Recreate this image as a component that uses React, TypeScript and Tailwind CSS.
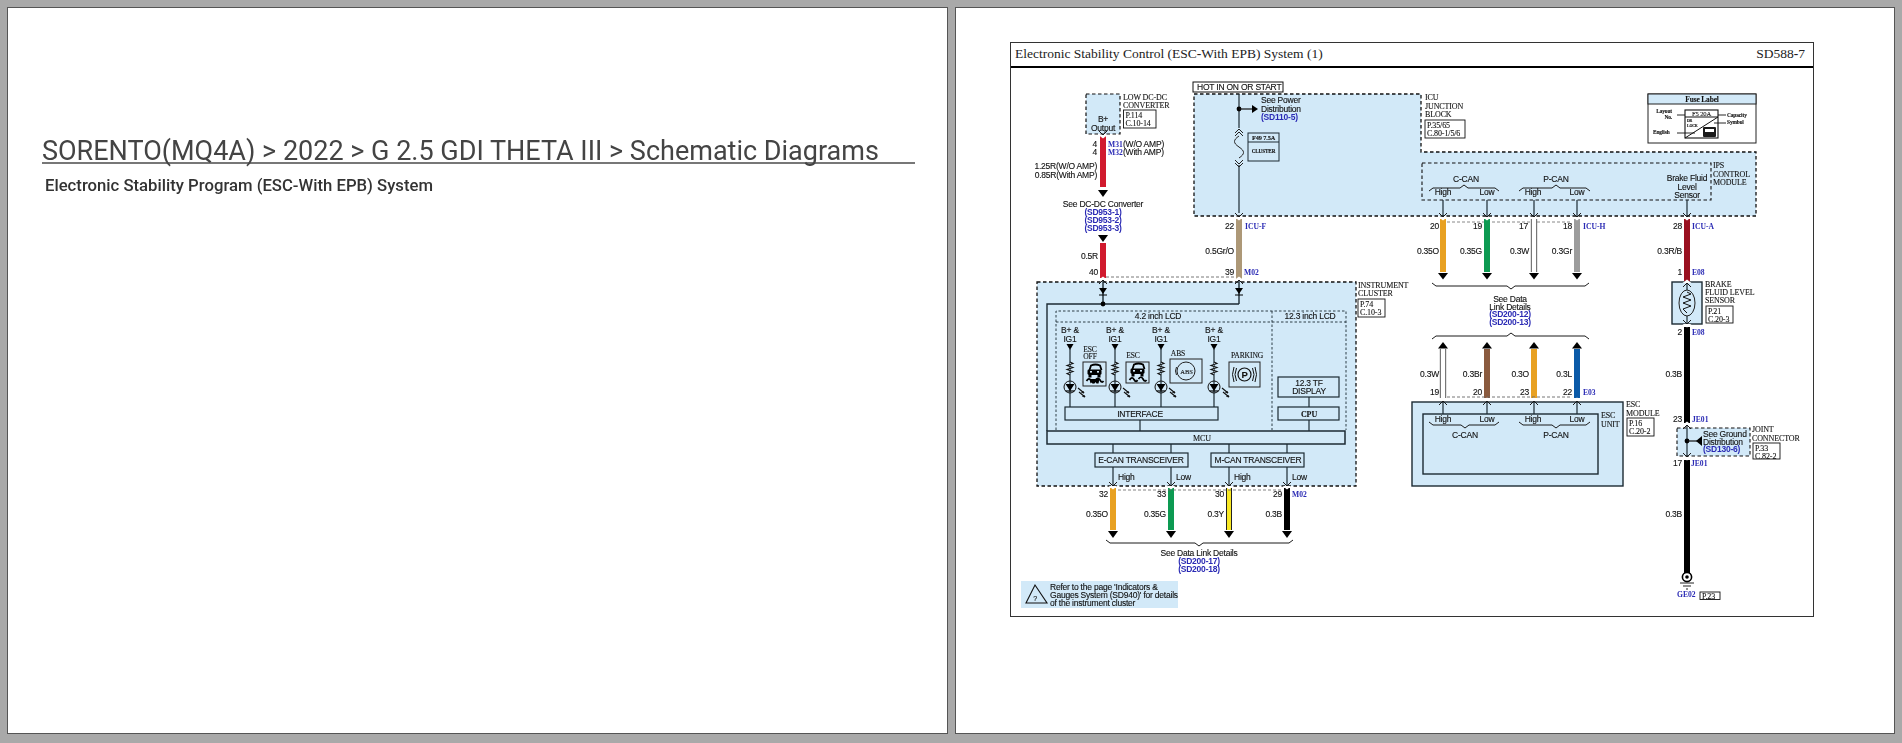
const INK = "#1c2a33";
const SKY = "#d2e9f8";
const BLUE = "#2a2ab4";

type TextProps = {
  x: number;
  y: number;
  children: React.ReactNode;
  size?: number;
  anchor?: "start" | "middle" | "end";
  bold?: boolean;
};

// sans label, most of the diagram uses this
function L({ x, y, children, size = 8.5, anchor = "start", bold }: TextProps) {
  return (
    <text x={x} y={y} fontSize={size} textAnchor={anchor} fontWeight={bold ? 700 : 400} fill="#111" stroke="#111" strokeWidth={0.12} className="font-['Liberation_Sans',sans-serif] tracking-[-0.22px]">
      {children}
    </text>
  );
}

// serif label for component names and page refs
function S({ x, y, children, size = 8, anchor = "start", bold }: TextProps) {
  return (
    <text x={x} y={y} fontSize={size} textAnchor={anchor} fontWeight={bold ? 700 : 400} fill="#111" stroke="#111" strokeWidth={0.1} className="font-['Liberation_Serif',serif] tracking-[-0.12px]">
      {children}
    </text>
  );
}

// blue sheet reference
function Ref({ x, y, children, anchor = "middle" }: TextProps) {
  return (
    <text x={x} y={y} fontSize={8.5} textAnchor={anchor} fontWeight={700} fill={BLUE} className="font-['Liberation_Sans',sans-serif] tracking-[-0.22px]">
      {children}
    </text>
  );
}

// blue connector name
function Con({ x, y, children }: TextProps) {
  return (
    <text x={x} y={y} fontSize={7.6} fontWeight={700} fill={BLUE} className="font-['Liberation_Serif',serif]">
      {children}
    </text>
  );
}

function Wire({ x, y1, y2, color, hollow }: { x: number; y1: number; y2: number; color: string; hollow?: boolean }) {
  if (hollow) {
    return (
      <g>
        <rect x={x - 3} y={y1} width={6} height={y2 - y1} fill="#fff" />
        <line x1={x - 2.6} y1={y1} x2={x - 2.6} y2={y2} stroke="#777" strokeWidth={1.2} />
        <line x1={x + 2.6} y1={y1} x2={x + 2.6} y2={y2} stroke="#777" strokeWidth={1.2} />
      </g>
    );
  }
  return <rect x={x - 3} y={y1} width={6} height={y2 - y1} fill={color} />;
}

function Pin({ x, y, up }: { x: number; y: number; up?: boolean }) {
  const s = up ? -1 : 1;
  return (
    <g>
      <polygon points={`${x - 4.5},${y} ${x + 4.5},${y} ${x},${y + 3.5 * s}`} fill="#fff" />
      <polyline points={`${x - 4},${y - 4 * s} ${x},${y} ${x + 4},${y - 4 * s}`} fill="none" stroke="#1a1a1a" strokeWidth={1} />
    </g>
  );
}

function Tri({ x, y, up, w = 5, h = 7 }: { x: number; y: number; up?: boolean; w?: number; h?: number }) {
  return <polygon points={up ? `${x - w},${y + h} ${x + w},${y + h} ${x},${y}` : `${x - w},${y} ${x + w},${y} ${x},${y + h}`} fill="#000" />;
}

function V({ x, y1, y2, w = 1.2 }: { x: number; y1: number; y2: number; w?: number }) {
  return <line x1={x} y1={y1} x2={x} y2={y2} stroke={INK} strokeWidth={w} />;
}

function Brace({ x1, x2, c, y, up }: { x1: number; x2: number; c: number; y: number; up?: boolean }) {
  const s = up ? -1 : 1;
  return (
    <polyline
      points={`${x1},${y - 3 * s} ${x1 + 4},${y} ${c - 4},${y} ${c},${y + 3 * s} ${c + 4},${y} ${x2 - 4},${y} ${x2},${y - 3 * s}`}
      fill="none"
      stroke="#1a1a1a"
      strokeWidth={1}
    />
  );
}

function RefBox({ x, y, w, h, a, b }: { x: number; y: number; w: number; h: number; a: string; b: string }) {
  return (
    <g>
      <rect x={x} y={y} width={w} height={h} fill="#fff" stroke="#111" strokeWidth={0.9} />
      <S x={x + 2} y={y + 8}>{a}</S>
      <S x={x + 2} y={y + 15.5}>{b}</S>
    </g>
  );
}

function Box({ x, y, w, h, sw = 1.2 }: { x: number; y: number; w: number; h: number; sw?: number }) {
  return <rect x={x} y={y} width={w} height={h} fill={SKY} stroke={INK} strokeWidth={sw} />;
}

function Zig({ x, y }: { x: number; y: number }) {
  return (
    <polyline
      points={`${x},${y} ${x + 3},${y + 1.5} ${x - 3},${y + 3.5} ${x + 3},${y + 5.5} ${x - 3},${y + 7.5} ${x + 3},${y + 9.5} ${x - 3},${y + 11.5} ${x},${y + 13}`}
      fill={SKY}
      stroke="#111"
      strokeWidth={1.1}
    />
  );
}

function Lamp({ x }: { x: number }) {
  return (
    <g>
      <L x={x} y={333} anchor="middle">B+ &amp;</L>
      <L x={x} y={342} anchor="middle">IG1</L>
      <Tri x={x} y={344} w={3.5} h={6} />
      <V x={x} y1={349} y2={407} />
      <Zig x={x} y={362} />
      <circle cx={x} cy={387} r={6} fill={SKY} stroke="#111" strokeWidth={1} />
      <V x={x} y1={381} y2={393} />
      <polygon points={`${x - 4.5},${384} ${x + 4.5},${384} ${x},${391}`} fill="#000" />
      <line x1={x - 4.5} y1={391} x2={x + 4.5} y2={391} stroke="#000" strokeWidth={1.2} />
      <path d={`M${x + 8} ${388}l6 5m-5 -1l6 5`} stroke="#111" strokeWidth={1.1} fill="none" />
      <path d={`M${x + 14} ${393}l-2.5 -.5l1.5 -1.5zM${x + 15} ${397}l-2.5 -.5l1.5 -1.5z`} fill="#111" stroke="#111" strokeWidth={0.6} />
    </g>
  );
}

// skid car telltale used for ESC and ESC OFF
function SkidCar({ x, y, off }: { x: number; y: number; off?: boolean }) {
  return (
    <g>
      <path d={`M${x - 5} ${y - 2}l1.5 -4.5q4.5 -2 9 0l1.5 4.5`} fill="none" stroke="#000" strokeWidth={1.8} />
      <rect x={x - 7} y={y - 2.5} width={14} height={5.5} rx={1.4} fill="#000" />
      <rect x={x - 4.5} y={y - 1} width={2} height={1.6} fill={SKY} />
      <rect x={x + 2.5} y={y - 1} width={2} height={1.6} fill={SKY} />
      <rect x={x - 6} y={y + 3} width={3} height={2.5} fill="#000" />
      <rect x={x + 3} y={y + 3} width={3} height={2.5} fill="#000" />
      <path d={`M${x - 8} ${y + 9}q2.5 -4 4.5 -.5t3.5 .5M${x + 1} ${y + 8}q2.5 -3.5 4.5 0t3.5 1`} fill="none" stroke="#000" strokeWidth={1.7} />
      {off && <path d={`M${x - 5} ${y + 7}h10l-1 4.5h-2l-1 -1.5l-1 1.5h-2l-1 -1.5l-1 1.5z`} fill="#000" />}
    </g>
  );
}

function Diagram() {
  return (
    <svg viewBox="1011 68 802 548" className="block h-[548px] w-[802px] blur-[0.35px]">
      {/* B+ output */}
      <rect x={1086} y={94} width={34} height={40} fill={SKY} stroke="#111" strokeWidth={1.2} strokeDasharray="3.5 2.5" />
      <L x={1103} y={122} anchor="middle">B+</L>
      <L x={1103} y={131} anchor="middle">Output</L>
      <S x={1123} y={100}>LOW DC-DC</S>
      <S x={1123} y={108}>CONVERTER</S>
      <RefBox x={1123.5} y={110} w={32.5} h={18} a="P.114" b="C.10-14" />
      <Wire x={1103} y1={136} y2={187} color="#d11a2e" />
      <Pin x={1103} y={135} />
      <L x={1097} y={147} anchor="end">4</L>
      <L x={1097} y={155} anchor="end">4</L>
      <Con x={1108} y={147}>M31</Con>
      <L x={1123} y={147}>(W/O AMP)</L>
      <Con x={1108} y={155}>M32</Con>
      <L x={1123} y={155}>(With AMP)</L>
      <L x={1097} y={169} anchor="end">1.25R(W/O AMP)</L>
      <L x={1097} y={178} anchor="end">0.85R(With AMP)</L>
      <Tri x={1103} y={190} />
      <L x={1103} y={207} anchor="middle">See DC-DC Converter</L>
      <Ref x={1103} y={215}>(SD953-1)</Ref>
      <Ref x={1103} y={223}>(SD953-2)</Ref>
      <Ref x={1103} y={231}>(SD953-3)</Ref>
      <Tri x={1103} y={235} />
      <Wire x={1103} y1={243} y2={278} color="#d11a2e" />
      <L x={1098} y={259} anchor="end">0.5R</L>
      <L x={1098} y={275} anchor="end">40</L>

      {/* ICU junction block */}
      <polygon points="1194,94 1421,94 1421,152 1756,152 1756,216 1194,216" fill={SKY} stroke="#111" strokeWidth={1.3} strokeDasharray="3.5 2.5" />
      <rect x={1193} y={82} width={90} height={10} fill="#fff" stroke="#111" strokeWidth={1} />
      <L x={1197} y={90.3} size={8.5}>HOT IN ON OR START</L>
      <V x={1239} y1={94} y2={213} />
      <circle cx={1239} cy={109} r={2.4} fill="#000" />
      <line x1={1239} y1={109} x2={1254} y2={109} stroke="#111" strokeWidth={1.2} />
      <polygon points="1252,105 1258,109 1252,113" fill="#000" />
      <L x={1261} y={103}>See Power</L>
      <L x={1261} y={112}>Distribution</L>
      <Ref x={1261} y={120} anchor="start">(SD110-5)</Ref>
      <rect x={1236} y={128} width={6} height={37} fill={SKY} />
      <path d="M1235 133l4-4l4 4M1235 136l4-4l4 4M1235 160l4 4l4-4M1235 163l4 4l4-4" fill="none" stroke="#222" strokeWidth={1} />
      <path d="M1239 136c-6 4-6 7 0 11c6 4 6 7 0 11" fill="none" stroke="#222" strokeWidth={1} />
      <rect x={1248} y={133} width={31} height={28} fill={SKY} stroke={INK} strokeWidth={1} />
      <line x1={1248} y1={142} x2={1279} y2={142} stroke={INK} strokeWidth={1} />
      <S x={1263.5} y={140} size={6.3} anchor="middle" bold>F49 7.5A</S>
      <S x={1263.5} y={153} size={5.2} anchor="middle" bold>CLUSTER</S>
      <Wire x={1239} y1={219} y2={279} color="#ad9877" />
      <Pin x={1239} y={217} />
      <L x={1234} y={229} anchor="end">22</L>
      <Con x={1245} y={229}>ICU-F</Con>
      <L x={1234} y={254} anchor="end">0.5Gr/O</L>
      <L x={1234} y={275} anchor="end">39</L>
      <Con x={1244} y={275}>M02</Con>
      <S x={1425} y={100}>ICU</S>
      <S x={1425} y={108.5}>JUNCTION</S>
      <S x={1425} y={117}>BLOCK</S>
      <RefBox x={1425} y={120} w={40} h={18} a="P.35/65" b="C.80-1/5/6" />

      {/* fuse legend */}
      <rect x={1648} y={94} width={108} height={49} fill="#fff" stroke="#222" strokeWidth={1} />
      <rect x={1648} y={94} width={108} height={10} fill={SKY} stroke="#222" strokeWidth={1} />
      <S x={1702} y={102} size={7.4} anchor="middle" bold>Fuse Label</S>
      <rect x={1685} y={110} width={33} height={28} fill="#fff" stroke="#111" strokeWidth={1.1} />
      <line x1={1685} y1={117} x2={1718} y2={117} stroke="#111" strokeWidth={1} />
      <line x1={1685} y1={138} x2={1718} y2={117} stroke="#111" strokeWidth={1} />
      <S x={1701.5} y={116} size={6.6} anchor="middle">F5 20A</S>
      <S x={1687} y={122} size={3.8} bold>DR</S>
      <S x={1687} y={127} size={3.8} bold>LOCK</S>
      <rect x={1703} y={127} width={13} height={10} rx={1} fill="#1a1a1a" />
      <rect x={1705} y={129} width={9} height={3} fill="#fff" />
      <S x={1672} y={113} size={5.4} anchor="end" bold>Layout</S>
      <S x={1672} y={119} size={5.4} anchor="end" bold>No.</S>
      <S x={1653} y={134} size={5.4} bold>English</S>
      <S x={1727} y={116.5} size={5.4} bold>Capacity</S>
      <S x={1727} y={124} size={5.4} bold>Symbol</S>
      <path d="M1677 115h8M1718 115h8M1714 123h12M1677 133h18" stroke="#111" strokeWidth={0.9} fill="none" />

      {/* IPS control module */}
      <rect x={1422} y={163} width={289} height={37} fill={SKY} stroke="#111" strokeWidth={1.1} strokeDasharray="3.5 2.5" />
      <S x={1713} y={168}>IPS</S>
      <S x={1713} y={176.5}>CONTROL</S>
      <S x={1713} y={185}>MODULE</S>
      <L x={1466} y={182} anchor="middle">C-CAN</L>
      <L x={1556} y={182} anchor="middle">P-CAN</L>
      <Brace x1={1429} x2={1499} c={1464} y={188} up />
      <Brace x1={1519} x2={1590} c={1556} y={188} up />
      <L x={1443} y={195} anchor="middle">High</L>
      <L x={1487} y={195} anchor="middle">Low</L>
      <L x={1533} y={195} anchor="middle">High</L>
      <L x={1577} y={195} anchor="middle">Low</L>
      <L x={1687} y={181} anchor="middle">Brake Fluid</L>
      <L x={1687} y={190} anchor="middle">Level</L>
      <L x={1687} y={198} anchor="middle">Sensor</L>

      {[1443, 1487, 1534, 1577, 1687].map((x) => (
        <V key={x} x={x} y1={200} y2={217} />
      ))}
      <line x1={1447} y1={222} x2={1572} y2={222} stroke="#888" strokeWidth={1} strokeDasharray="3 2" />
      <Wire x={1443} y1={219} y2={272} color="#e8a122" />
      <Wire x={1487} y1={219} y2={272} color="#0d9a52" />
      <Wire x={1534} y1={219} y2={272} color="#fff" hollow />
      <Wire x={1577} y1={219} y2={272} color="#9c9c9c" />
      <Wire x={1687} y1={219} y2={283} color="#9a1020" />
      {[1443, 1487, 1534, 1577, 1687].map((x) => (
        <Pin key={x} x={x} y={217} />
      ))}
      <L x={1439} y={229} anchor="end">20</L>
      <L x={1482} y={229} anchor="end">19</L>
      <L x={1528} y={229} anchor="end">17</L>
      <L x={1572} y={229} anchor="end">18</L>
      <Con x={1583} y={229}>ICU-H</Con>
      <L x={1682} y={229} anchor="end">28</L>
      <Con x={1692} y={229}>ICU-A</Con>
      <L x={1439} y={254} anchor="end">0.35O</L>
      <L x={1482} y={254} anchor="end">0.35G</L>
      <L x={1529} y={254} anchor="end">0.3W</L>
      <L x={1572} y={254} anchor="end">0.3Gr</L>
      <L x={1682} y={254} anchor="end">0.3R/B</L>
      <L x={1682} y={275} anchor="end">1</L>
      <Con x={1692} y={275}>E08</Con>
      {[1443, 1487, 1534, 1577].map((x) => (
        <Tri key={x} x={x} y={273} h={6.5} />
      ))}
      <Brace x1={1432} x2={1589} c={1511} y={286} />
      <L x={1510} y={302} anchor="middle">See Data</L>
      <L x={1510} y={310} anchor="middle">Link Details</L>
      <Ref x={1510} y={317}>(SD200-12)</Ref>
      <Ref x={1510} y={325}>(SD200-13)</Ref>
      <Brace x1={1432} x2={1589} c={1511} y={336} up />

      {/* ESC module */}
      {[1443, 1487, 1534, 1577].map((x) => (
        <Tri key={x} x={x} y={342} up h={6.5} />
      ))}
      <Wire x={1443} y1={349} y2={398} color="#fff" hollow />
      <Wire x={1487} y1={349} y2={398} color="#8a5a3e" />
      <Wire x={1534} y1={349} y2={398} color="#e8a122" />
      <Wire x={1577} y1={349} y2={398} color="#0b5aa8" />
      <line x1={1447} y1={397} x2={1572} y2={397} stroke="#666" strokeWidth={0.9} strokeDasharray="3 2" />
      <L x={1439} y={377} anchor="end">0.3W</L>
      <L x={1482} y={377} anchor="end">0.3Br</L>
      <L x={1529} y={377} anchor="end">0.3O</L>
      <L x={1572} y={377} anchor="end">0.3L</L>
      <L x={1439} y={395} anchor="end">19</L>
      <L x={1482} y={395} anchor="end">20</L>
      <L x={1529} y={395} anchor="end">23</L>
      <L x={1572} y={395} anchor="end">22</L>
      <Con x={1583} y={395}>E03</Con>
      <Box x={1412} y={402} w={211} h={84} sw={1.4} />
      <Box x={1423} y={414} w={175} h={60} sw={1.4} />
      {[1443, 1487, 1534, 1577].map((x) => (
        <g key={x}>
          <V x={x} y1={400} y2={414} />
          <Pin x={x} y={401} up />
        </g>
      ))}
      <L x={1443} y={422} anchor="middle">High</L>
      <L x={1487} y={422} anchor="middle">Low</L>
      <L x={1533} y={422} anchor="middle">High</L>
      <L x={1577} y={422} anchor="middle">Low</L>
      <Brace x1={1429} x2={1499} c={1465} y={425} />
      <Brace x1={1519} x2={1590} c={1556} y={425} />
      <L x={1465} y={438} anchor="middle">C-CAN</L>
      <L x={1556} y={438} anchor="middle">P-CAN</L>
      <S x={1601} y={418}>ESC</S>
      <S x={1601} y={427}>UNIT</S>
      <S x={1626} y={407}>ESC</S>
      <S x={1626} y={415.5}>MODULE</S>
      <RefBox x={1627} y={418} w={27} h={18} a="P.16" b="C.20-2" />

      {/* brake fluid level sensor */}
      <Box x={1672} y={282} w={30} h={42} sw={1.4} />
      <V x={1687} y1={282} y2={324} />
      <ellipse cx={1687} cy={303} rx={8} ry={13} fill={SKY} stroke="#222" strokeWidth={1} />
      <polyline points="1687,292 1691,294 1683,297 1691,300 1683,303 1691,306 1683,309 1687,313" fill="none" stroke="#111" strokeWidth={1} />
      <Pin x={1687} y={283} up />
      <S x={1705} y={287}>BRAKE</S>
      <S x={1705} y={295}>FLUID LEVEL</S>
      <S x={1705} y={303}>SENSOR</S>
      <RefBox x={1706} y={306} w={27} h={17} a="P.21" b="C.20-3" />
      <Wire x={1687} y1={327} y2={423} color="#000" />
      <Pin x={1687} y={324} />
      <L x={1682} y={335} anchor="end">2</L>
      <Con x={1692} y={335}>E08</Con>
      <L x={1682} y={377} anchor="end">0.3B</L>
      <L x={1682} y={422} anchor="end">23</L>
      <Con x={1692} y={422}>JE01</Con>

      {/* joint connector */}
      <rect x={1677} y={428} width={73} height={28} fill={SKY} stroke="#111" strokeWidth={1.1} strokeDasharray="3.5 2.5" />
      <V x={1687} y1={424} y2={458} />
      <Pin x={1687} y={425} up />
      <circle cx={1687} cy={441} r={2.4} fill="#000" />
      <line x1={1687} y1={441} x2={1702} y2={441} stroke="#111" strokeWidth={1.2} />
      <polygon points="1702,436 1702,446 1696,441" fill="#000" />
      <L x={1703} y={437}>See Ground</L>
      <L x={1703} y={444.5}>Distribution</L>
      <Ref x={1703} y={452} anchor="start">(SD130-6)</Ref>
      <S x={1752} y={432}>JOINT</S>
      <S x={1752} y={441}>CONNECTOR</S>
      <RefBox x={1753} y={443} w={27} h={16} a="P.33" b="C.82-2" />
      <Wire x={1687} y1={460} y2={574} color="#000" />
      <Pin x={1687} y={457} />
      <L x={1682} y={466} anchor="end">17</L>
      <Con x={1691} y={466}>JE01</Con>
      <L x={1682} y={517} anchor="end">0.3B</L>
      <circle cx={1687} cy={577} r={4.6} fill="#fff" stroke="#000" strokeWidth={1.6} />
      <circle cx={1687} cy={577} r={1.8} fill="#000" />
      <path d="M1680 583h14M1683 586h8M1686 589h2" stroke="#222" strokeWidth={1} />
      <Con x={1677} y={597}>GE02</Con>
      <rect x={1700} y={592} width={20} height={7.5} fill="#fff" stroke="#111" strokeWidth={0.9} />
      <S x={1702} y={598.5}>P.23</S>

      {/* instrument cluster */}
      <rect x={1037} y={282} width={319} height={204} fill={SKY} stroke="#111" strokeWidth={1.3} strokeDasharray="3.5 2.5" />
      <S x={1358} y={288}>INSTRUMENT</S>
      <S x={1358} y={296}>CLUSTER</S>
      <RefBox x={1358} y={299} w={27} h={18} a="P.74" b="C.10-3" />
      <line x1={1106} y1={277} x2={1235} y2={277} stroke="#555" strokeWidth={0.8} strokeDasharray="3 2" />
      {[1103, 1239].map((x) => (
        <g key={x}>
          <V x={x} y1={280} y2={304} w={1.4} />
          <Pin x={x} y={280} up />
          <Tri x={x} y={288} w={4} h={6} />
          <line x1={x - 4} y1={295} x2={x + 4} y2={295} stroke="#000" strokeWidth={1} />
        </g>
      ))}
      <path d="M1047 431V304H1239" fill="none" stroke={INK} strokeWidth={1.4} />
      <circle cx={1103} cy={304} r={2.4} fill="#000" />
      <path d="M1056 430V311H1346V430M1272 311V430M1056 322H1346" fill="none" stroke={INK} strokeWidth={0.9} strokeDasharray="2.5 2" />
      <L x={1158} y={318.5} anchor="middle">4.2 inch LCD</L>
      <L x={1310} y={318.5} anchor="middle">12.3 inch LCD</L>
      {[1070, 1115, 1161, 1214].map((x) => (
        <Lamp key={x} x={x} />
      ))}

      <S x={1090} y={352} size={7.6} anchor="middle">ESC</S>
      <S x={1090} y={359} size={7.6} anchor="middle">OFF</S>
      <rect x={1083} y={362} width={23} height={24} fill={SKY} stroke="#222" strokeWidth={1} />
      <SkidCar x={1094.5} y={372} off />
      <S x={1133} y={358} size={7.6} anchor="middle">ESC</S>
      <rect x={1126} y={362} width={23} height={21} fill={SKY} stroke="#222" strokeWidth={1} />
      <SkidCar x={1137.5} y={371} />
      <S x={1178} y={356} size={7.6} anchor="middle">ABS</S>
      <rect x={1170} y={359} width={32} height={24} fill={SKY} stroke="#222" strokeWidth={1} />
      <circle cx={1186} cy={371} r={9} fill="none" stroke="#222" strokeWidth={1} />
      <path d="M1176.5 367q-2 4 0 8" fill="none" stroke="#222" strokeWidth={1} />
      <S x={1186.5} y={373.5} size={6.6} anchor="middle">ABS</S>
      <S x={1247} y={358} size={7.6} anchor="middle">PARKING</S>
      <rect x={1229} y={362} width={31} height={25} fill={SKY} stroke="#222" strokeWidth={1} />
      <circle cx={1244.5} cy={374.5} r={6.5} fill="none" stroke="#111" strokeWidth={1.2} />
      <path d="M1236.5 368q-3 6.5 0 13M1234 367q-3 7.5 0 15M1252.5 368q3 6.5 0 13M1255 367q3 7.5 0 15" fill="none" stroke="#111" strokeWidth={1} />
      <L x={1244.5} y={378} size={9.5} anchor="middle" bold>P</L>

      <Box x={1065} y={407} w={153} h={13} />
      <L x={1140} y={416.5} anchor="middle">INTERFACE</L>
      <V x={1140} y1={420} y2={431} />
      <Box x={1278} y={377} w={61} h={20} />
      <L x={1309} y={386} anchor="middle">12.3 TF</L>
      <L x={1309} y={393.5} anchor="middle">DISPLAY</L>
      <V x={1309} y1={397} y2={407} />
      <Box x={1278} y={407} w={61} h={13} />
      <S x={1309} y={416.5} anchor="middle" bold>CPU</S>
      <V x={1309} y1={420} y2={431} />
      <Box x={1047} y={431} w={298} h={13} sw={1.5} />
      <S x={1202} y={440.5} anchor="middle">MCU</S>
      {[1113, 1171, 1229, 1287].map((x) => (
        <g key={x}>
          <V x={x} y1={444} y2={486} />
        </g>
      ))}
      <Box x={1095} y={453} w={93} h={14} />
      <L x={1141} y={463} anchor="middle">E-CAN TRANSCEIVER</L>
      <Box x={1211} y={453} w={93} h={14} />
      <L x={1258} y={463} anchor="middle">M-CAN TRANSCEIVER</L>
      <L x={1118} y={480}>High</L>
      <L x={1176} y={480}>Low</L>
      <L x={1234} y={480}>High</L>
      <L x={1292} y={480}>Low</L>

      <Wire x={1113} y1={488} y2={530} color="#e8a122" />
      <Wire x={1171} y1={488} y2={530} color="#0d9a52" />
      <Wire x={1229} y1={488} y2={530} color="#222" />
      <rect x={1227} y={488} width={4} height={42} fill="#f8e825" />
      <Wire x={1287} y1={488} y2={530} color="#000" />
      <line x1={1118} y1={490} x2={1282} y2={490} stroke="#666" strokeWidth={0.8} strokeDasharray="3 2" />
      {[1113, 1171, 1229, 1287].map((x) => (
        <g key={x}>
          <Pin x={x} y={486} />
          <Tri x={x} y={531} />
        </g>
      ))}
      <L x={1108} y={497} anchor="end">32</L>
      <L x={1166} y={497} anchor="end">33</L>
      <L x={1224} y={497} anchor="end">30</L>
      <L x={1282} y={497} anchor="end">29</L>
      <Con x={1292} y={497}>M02</Con>
      <L x={1108} y={517} anchor="end">0.35O</L>
      <L x={1166} y={517} anchor="end">0.35G</L>
      <L x={1224} y={517} anchor="end">0.3Y</L>
      <L x={1282} y={517} anchor="end">0.3B</L>
      <Brace x1={1106} x2={1293} c={1199} y={543} />
      <L x={1199} y={556} anchor="middle">See Data Link Details</L>
      <Ref x={1199} y={564}>(SD200-17)</Ref>
      <Ref x={1199} y={572}>(SD200-18)</Ref>

      {/* note */}
      <rect x={1021} y={581} width={157} height={27} fill={SKY} />
      <polygon points="1035,585 1047,603 1026,603" fill="none" stroke="#111" strokeWidth={1.1} />
      <L x={1035} y={601} size={7} anchor="middle">?</L>
      <L x={1050} y={589.5}>Refer to the page 'Indicators &amp;</L>
      <L x={1050} y={597.5}>Gauges System (SD940)' for details</L>
      <L x={1050} y={606}>of the instrument cluster</L>
    </svg>
  );
}

export default function App() {
  return (
    <div className="flex h-[743px] w-[1902px] gap-[7px] overflow-hidden bg-[#a9a9a9] pl-[7px] pr-[7px] pt-[7px]">
      <div className="h-[727px] w-[941px] shrink-0 border border-[#555] bg-white pl-[34px] pt-[132px]">
        <h1 className="w-[873px] border-b-2 border-[#777] font-['Roboto',sans-serif] text-[27px] font-normal leading-[22px] text-[#444] blur-[0.3px]">
          SORENTO(MQ4A) &gt; 2022 &gt; G 2.5 GDI THETA III &gt; Schematic Diagrams
        </h1>
        <p className="mt-[12px] pl-[3px] font-['Roboto',sans-serif] text-[16.7px] font-medium leading-[20px] text-[#333] blur-[0.3px]">
          Electronic Stability Program (ESC-With EPB) System
        </p>
      </div>
      <div className="h-[727px] flex-1 border border-[#555] bg-white pl-[54px] pt-[34px]">
        <div className="h-[575px] w-[804px] border border-[#333]">
          <div className="flex h-[25px] items-end justify-between border-b-2 border-black px-[4px] pb-[4px] font-['Liberation_Serif',serif] text-[13.5px] leading-[16px] text-[#222]">
            <span>
              Electronic Stability Control (ESC<b>-</b>With EPB) System (1)
            </span>
            <span className="pr-[4px]">
              SD588<b>-</b>7
            </span>
          </div>
          <Diagram />
        </div>
      </div>
    </div>
  );
}
